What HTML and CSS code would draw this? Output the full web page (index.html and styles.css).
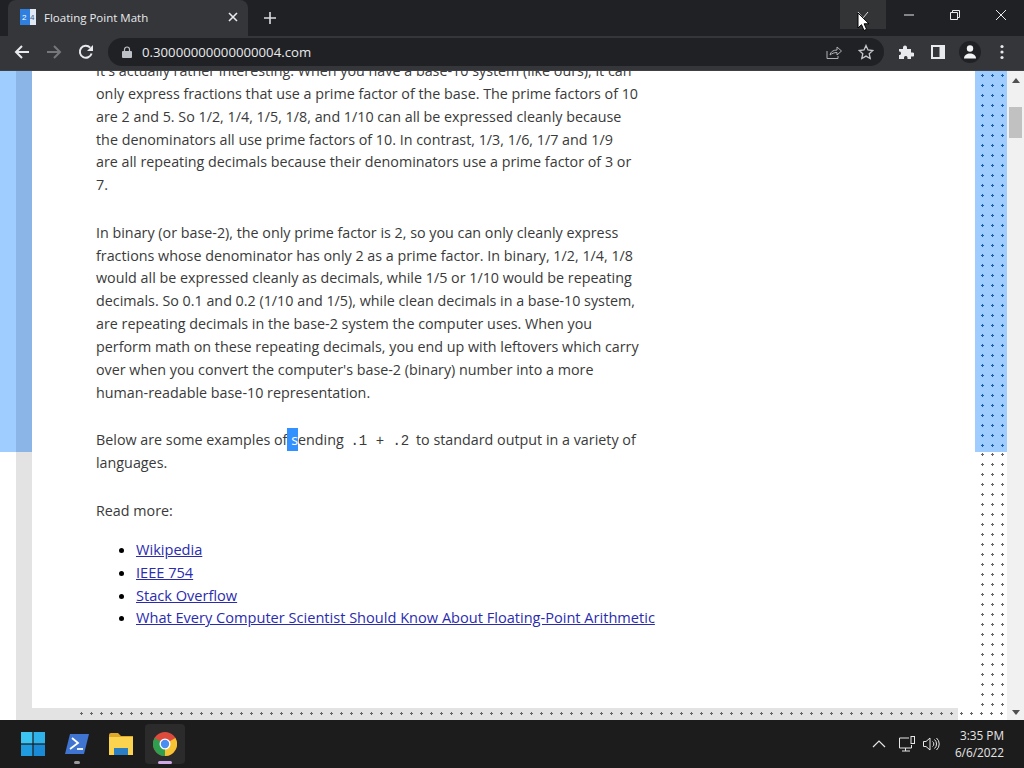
FILE: index.html
```html
<!DOCTYPE html>
<html lang="en">
<head>
<meta charset="utf-8">
<title>Floating Point Math</title>
<link rel="stylesheet" href="styles.css">
</head>
<body>
<div class="window">
  <header class="tabstrip">
    <div class="tab">
      <svg class="favicon" width="16" height="16" viewBox="0 0 16 16"><rect width="11" height="16" fill="#2f7fe0"/><rect x="10" width="6" height="16" fill="#dfe8f3"/><text x="2" y="11" font-size="8" fill="#fff" font-family="Liberation Sans">2</text><text x="10" y="11" font-size="8" fill="#3a5a90" font-family="Liberation Sans">4</text></svg>
      <span class="tab-title">Floating Point Math</span>
      <svg class="tab-close" width="10" height="10" viewBox="0 0 10 10"><path d="M1 1l8 8M9 1l-8 8" stroke="#e8eaed" stroke-width="1.6"/></svg>
    </div>
    <svg class="new-tab" width="14" height="14" viewBox="0 0 14 14"><path d="M7 1v12M1 7h12" stroke="#dadce0" stroke-width="1.6"/></svg>
    <div class="caption">
      <div class="cap-btn cap-hover"><svg width="12" height="12" viewBox="0 0 12 12"><path d="M1 3l5 6 5-6" fill="none" stroke="#dadce0"/></svg></div>
      <div class="cap-btn"><svg width="12" height="12" viewBox="0 0 12 12"><path d="M1 6h10" stroke="#e8eaed"/></svg></div>
      <div class="cap-btn"><svg width="12" height="12" viewBox="0 0 12 12"><path d="M1.5 3.5h7v7h-7zM3.5 3.5v-2h7v7h-2" fill="none" stroke="#e8eaed"/></svg></div>
      <div class="cap-btn"><svg width="12" height="12" viewBox="0 0 12 12"><path d="M1 1l10 10M11 1L1 11" stroke="#e8eaed"/></svg></div>
    </div>
  </header>

  <nav class="toolbar">
    <svg class="nav-icon" width="16" height="16" viewBox="0 0 16 16"><path d="M15 8H2M8 2L2 8l6 6" fill="none" stroke="#e8eaed" stroke-width="2"/></svg>
    <svg class="nav-icon" width="16" height="16" viewBox="0 0 16 16"><path d="M1 8h13M8 2l6 6-6 6" fill="none" stroke="#75777a" stroke-width="2"/></svg>
    <svg class="nav-icon" width="16" height="16" viewBox="0 0 16 16"><path d="M13.6 9.5A6 6 0 1 1 12.2 3.6" fill="none" stroke="#e8eaed" stroke-width="2"/><path d="M15 1v6H9z" fill="#e8eaed"/></svg>
    <div class="omnibox">
      <svg class="lock" width="10" height="12" viewBox="0 0 10 12"><path d="M2.5 5V3.5a2.5 2.5 0 0 1 5 0V5" fill="none" stroke="#bdc1c6" stroke-width="1.2"/><rect y="5" width="10" height="7" rx="1" fill="#bdc1c6"/></svg>
      <span class="url">0.30000000000000004.com</span>
      <svg class="omni-icon" width="16" height="16" viewBox="0 0 16 16"><path d="M1 7v7.500h11V12" fill="none" stroke="#aeb1b5"/><path d="M4 11c.5-3 3-5 7-5V3l4.500 4L11 11V8.500C8 8.500 6 9.500 4 11z" fill="none" stroke="#aeb1b5"/></svg>
      <svg class="omni-icon star" width="16" height="16" viewBox="0 0 16 16"><path d="M8 1.500l2 4.500 4.800.5-3.600 3.200 1 4.800L8 12.100 3.800 14.500l1-4.800L1.200 6.500 6 6z" fill="none" stroke="#c4c7cb" stroke-width="1.300"/></svg>
    </div>
    <div class="tools">
      <svg width="16" height="16" viewBox="0 0 16 16"><path d="M1 5h4V3.500a2 2 0 0 1 4 0V5h4v3.500h1.500a2 2 0 0 1 0 4H13V15H9.500v-1.500a1.800 1.800 0 0 0-3.500 0V15H1v-4h1a2 2 0 0 0 0-3.500H1z" fill="#e8eaed"/></svg>
      <svg width="16" height="16" viewBox="0 0 16 16"><rect x="1" y="1" width="14" height="14" fill="#e8eaed"/><rect x="3" y="3" width="6.500" height="10" fill="#35363a"/></svg>
      <span class="avatar"><svg width="14" height="14" viewBox="0 0 14 14"><circle cx="7" cy="3.500" r="3.200" fill="#f1f3f4"/><path d="M1 13.500c0-3.500 3-5 6-5s6 1.500 6 5z" fill="#f1f3f4"/></svg></span>
      <svg class="more" width="4" height="16" viewBox="0 0 4 16"><circle cx="2" cy="2.500" r="1.600" fill="#e8eaed"/><circle cx="2" cy="8" r="1.600" fill="#e8eaed"/><circle cx="2" cy="13.500" r="1.600" fill="#e8eaed"/></svg>
    </div>
  </nav>

  <main class="viewport">
    <div class="edge edge-outer"></div>
    <div class="edge edge-inner"></div>
    <div class="edge-low"></div>
    <article class="content">
      <p>It's actually rather interesting. When you have a base-10 system (like ours), it can only express fractions that use a prime factor of the base. The prime factors of 10 are 2 and 5. So 1/2, 1/4, 1/5, 1/8, and 1/10 can all be expressed cleanly because the denominators all use prime factors of 10. In contrast, 1/3, 1/6, 1/7 and 1/9<br>are all repeating decimals because their denominators use a prime factor of 3 or<br>7.</p>
      <p>In binary (or base-2), the only prime factor is 2, so you can only cleanly express fractions whose denominator has only 2 as a prime factor. In binary, 1/2, 1/4, 1/8 would all be expressed cleanly as decimals, while 1/5 or 1/10 would be repeating decimals. So 0.1 and 0.2 (1/10 and 1/5), while clean decimals in a base-10 system, are repeating decimals in the base-2 system the computer uses. When you perform math on these repeating decimals, you end up with leftovers which carry over when you convert the computer's base-2 (binary) number into a more human-readable base-10 representation.</p>
      <p>Below are some examples of<mark class="sel"> s</mark>ending <code>.1 + .2</code> to standard output in a variety of languages.</p>
      <p class="lead">Read more:</p>
      <ul>
        <li><a href="#">Wikipedia</a></li>
        <li><a href="#">IEEE 754</a></li>
        <li><a href="#">Stack Overflow</a></li>
        <li><a href="#">What Every Computer Scientist Should Know About Floating-Point Arithmetic</a></li>
      </ul>
    </article>
    <div class="dots dots-blue"></div>
    <div class="dots dots-white"></div>
    <div class="scrollbar">
      <span class="arrow-up"></span>
      <span class="thumb"></span>
      <span class="arrow-down"></span>
    </div>
    <div class="strip"><div class="strip-grey"></div><div class="strip-dots"></div></div>
  </main>

  <footer class="taskbar">
    <div class="apps">
      <div class="app">
        <svg width="24" height="24" viewBox="0 0 24 24"><rect width="11.400" height="11.400" fill="#3cc4f2"/><rect x="12.600" width="11.400" height="11.400" fill="#2fb2ea"/><rect y="12.600" width="11.400" height="11.400" fill="#1f9be0"/><rect x="12.600" y="12.600" width="11.400" height="11.400" fill="#1a8ad6"/></svg>
      </div>
      <div class="app">
        <svg width="24" height="20" viewBox="0 0 24 20"><path d="M5 0h19l-5 20H0z" fill="#3f74d0"/><path d="M7 4l6 5-8 6" fill="none" stroke="#fff" stroke-width="1.800"/><path d="M12 15h6" stroke="#fff" stroke-width="1.800"/></svg>
        <i class="pip pip-grey"></i>
      </div>
      <div class="app">
        <svg width="24" height="22" viewBox="0 0 24 22"><path d="M0 2q0-2 2-2h7l3 3h12v19H0z" fill="#e0a82a"/><rect y="4" width="24" height="18" fill="#fbd34f"/><rect x="5" y="15" width="14" height="7" fill="#2a7fc4"/></svg>
      </div>
      <div class="app app-active">
        <svg width="24" height="24" viewBox="0 0 24 24"><circle cx="12" cy="12" r="12" fill="#dd4b3d"/><path d="M12 12L1.600 6A12 12 0 0 0 12 24z" fill="#2f9e4f"/><path d="M12 12v12A12 12 0 0 0 22.400 6z" fill="#f6c333"/><circle cx="12" cy="12" r="5.500" fill="#fff"/><circle cx="12" cy="12" r="4.200" fill="#4a8cf0"/></svg>
        <i class="pip pip-pink"></i>
      </div>
    </div>
    <div class="tray">
      <svg class="chev" width="14" height="8" viewBox="0 0 14 8"><path d="M1 7l6-6 6 6" fill="none" stroke="#e6e6e6" stroke-width="1.200"/></svg>
      <svg width="17" height="17" viewBox="0 0 17 17"><path d="M10 2H.5v10h12V9M3 15h8M6.500 12v3" fill="none" stroke="#e6e6e6"/><rect x="12" y=".5" width="3.500" height="7" fill="none" stroke="#e6e6e6"/></svg>
      <svg width="17" height="14" viewBox="0 0 17 14"><path d="M.5 4.500H3L7 1v12L3 9.500H.5z" fill="none" stroke="#e6e6e6"/><path d="M9.500 4.500a3 3 0 0 1 0 5M11.500 2.500a6 6 0 0 1 0 9M13.500 1a8 8 0 0 1 0 12" fill="none" stroke="#e6e6e6"/></svg>
      <div class="clock"><span>3:35 PM</span><span>6/6/2022</span></div>
    </div>
  </footer>
</div>
<svg class="cursor" width="13" height="20" viewBox="0 0 13 20"><path d="M1 1v15l3.500-3.300L7 18.500l2.600-1.200-2.500-5.500h4.900z" fill="#fff" stroke="#000"/></svg>
</body>
</html>
```
FILE: styles.css
```css
* { box-sizing: border-box; }
html, body { margin: 0; height: 100%; overflow: hidden; }
body { font-family: "Open Sans", "Noto Sans", sans-serif; }
.window { display: flex; flex-direction: column; width: 1024px; height: 768px; }

.tabstrip { height: 36px; background: #202124; display: flex; align-items: flex-end; padding-left: 8px; flex: none; }
.tab { width: 240px; height: 36px; background: #35363a; border-radius: 8px 8px 0 0; display: flex; align-items: center; padding: 0 10px 2px 12px; color: #e8eaed; font-size: 11.500px; }
.favicon { margin-right: 8px; flex: none; }
.tab-title { flex: 1; }
.new-tab { margin: 0 0 11px 15px; }
.caption { margin-left: auto; display: flex; align-self: flex-start; }
.cap-btn { width: 46px; height: 29px; display: flex; align-items: center; justify-content: center; }
.cap-hover { background: #333436; }

.toolbar { height: 35px; background: #35363a; border-bottom: 1px solid #3f4044; display: flex; align-items: center; padding: 0 0 2px 14px; flex: none; }
.nav-icon { margin-right: 16px; flex: none; }
.omnibox { width: 776px; height: 28px; margin-left: -2px; background: #202124; border-radius: 14px; display: flex; align-items: center; padding-left: 14px; }
.lock { margin-right: 10px; flex: none; }
.url { flex: 1; color: #e8eaed; font-size: 13.200px; }
.omni-icon { margin-right: 16px; flex: none; }
.star { margin-right: 10px; }
.tools { display: flex; align-items: center; gap: 16px; margin-left: 14px; }
.avatar { width: 22px; height: 22px; border-radius: 50%; background: #202124; display: flex; align-items: center; justify-content: center; margin: 0 -3px; }
.more { margin-left: 6px; }

.viewport { flex: 1; min-height: 0; display: grid; grid-template-columns: 16px 16px 1fr 32px 17px; grid-template-rows: 381px 1fr 12px; background: #fff; overflow: hidden; }
.edge-outer { background: #a0cdff; grid-column: 1; grid-row: 1; }
.edge-inner { background: #8ab5e6; grid-column: 2; grid-row: 1; }
.edge-low { background: #e3e3e3; grid-column: 2; grid-row: 2 / 4; }
.content { grid-column: 3; grid-row: 1 / 3; padding-left: 64px; width: 614px; margin-top: -11px; color: #3a3a3a; font-size: 14.320px; line-height: 22.860px; }
.content p { margin: 0 0 24.600px; }
.content .lead { margin-bottom: 15.500px; }
.content ul { margin: 0; padding-left: 40px; width: 600px; font-size: 14.580px; color: #000; }
.content a { color: #2b2bb0; }
code { font-family: "Liberation Mono", monospace; font-size: 14px; line-height: 1; padding: 0 3px; }
.sel { background: #3390ff; color: #fff; padding: 2px 0; }
.dots { grid-column: 4; background-image: radial-gradient(circle at 1.500px 1.500px, var(--dot) 1.100px, transparent 1.400px); background-size: 10px 10px; background-position: 6px 3px; }
.dots-blue { --dot: #1c5fae; background-color: #9fcdff; grid-row: 1; }
.dots-white { --dot: #666; grid-row: 2; background-position: 6px 1px; }
.scrollbar { grid-column: 5; grid-row: 1 / 4; background: #f1f1f1; display: flex; flex-direction: column; align-items: center; }
.arrow-up { margin-top: 7px; border: 4px solid transparent; border-top: 0; border-bottom: 5px solid #505050; }
.thumb { width: 13px; height: 31px; margin-top: 24px; background: #c1c1c1; }
.arrow-down { margin-top: auto; margin-bottom: 5px; border: 4px solid transparent; border-bottom: 0; border-top: 5px solid #505050; }
.strip { grid-column: 3 / 5; grid-row: 3; position: relative; background: #fff; }
.strip-grey { width: 926px; height: 12px; background: #e3e3e3; }
.strip-dots { position: absolute; left: 48px; right: 0; top: 0; bottom: 0; background-image: radial-gradient(circle at 1.500px 1.500px, #666 1.100px, transparent 1.400px); background-size: 10px 10px; background-position: 0 4px; }

.taskbar { height: 48px; background: #1c1c1c; display: flex; align-items: center; justify-content: space-between; padding: 0 20px 0 13px; flex: none; }
.apps { display: flex; gap: 4px; }
.app { width: 40px; height: 40px; display: flex; align-items: center; justify-content: center; position: relative; border-radius: 4px; }
.app-active { background: #2b2b2b; }
.pip { position: absolute; bottom: 0; height: 3px; border-radius: 2px; }
.pip-grey { width: 6px; background: #9a9a9a; }
.pip-pink { width: 14px; background: #d0a8e8; }
.tray { display: flex; align-items: center; gap: 7px; color: #e6e6e6; }
.chev { margin-right: 6px; }
.clock { display: flex; flex-direction: column; align-items: flex-end; font-size: 11.800px; line-height: 17px; margin-left: 8px; }

.cursor { position: absolute; left: 857px; top: 12px; }
```
